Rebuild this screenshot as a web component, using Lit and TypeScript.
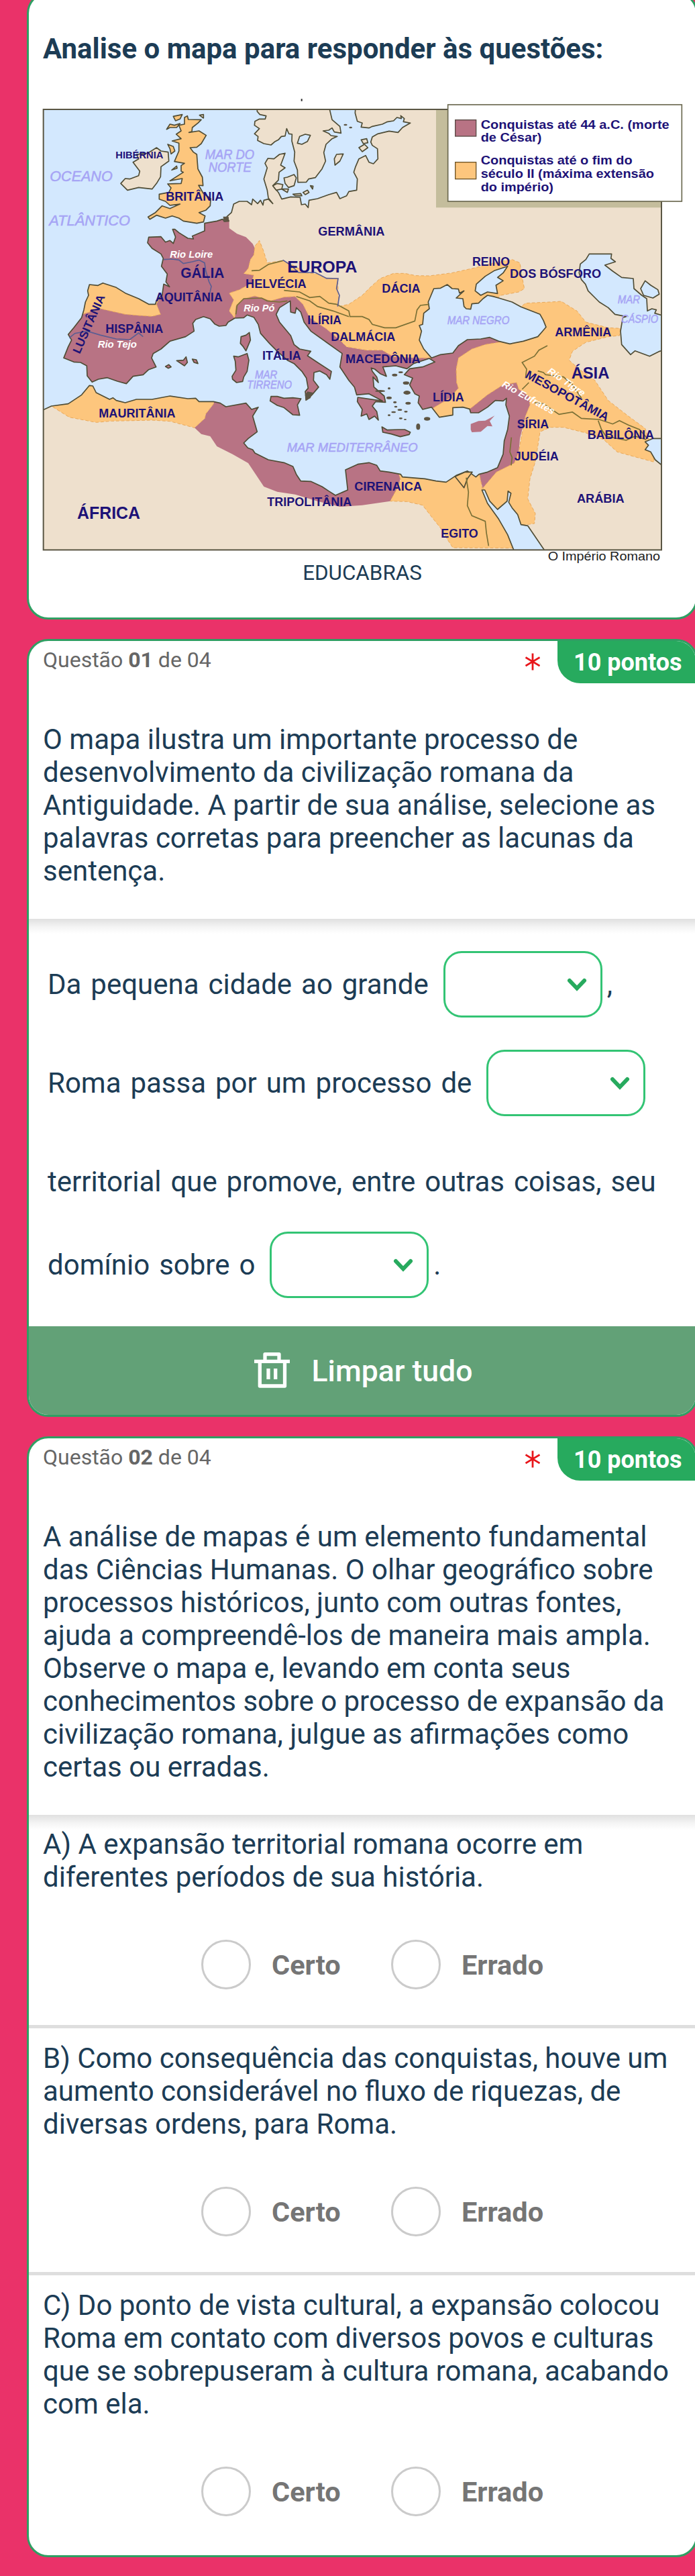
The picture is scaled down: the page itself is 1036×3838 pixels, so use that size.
import { html, svg, css, LitElement } from 'lit';
import { customElement, property } from 'lit/decorators.js';

// [text, x, baseline, width, size, rotation]
type MapLabel = [string, number, number, number, number, number?];

const LAND_LABELS: MapLabel[] = [
    ['HIBÉRNIA', 397, 288, 213, 46],
    ['BRITÂNIA', 622, 477, 258, 56],
    ['GERMÂNIA', 1303, 632, 297, 57],
    ['EUROPA', 1165, 797, 312, 74],
    ['GÁLIA', 688, 822, 195, 64],
    ['HELVÉCIA', 978, 866, 272, 56],
    ['AQUITÂNIA', 575, 927, 300, 56],
    ['HISPÂNIA', 352, 1067, 258, 56],
    ['ILÍRIA', 1255, 1028, 152, 56],
    ['DALMÁCIA', 1360, 1103, 288, 56],
    ['MACEDÔNIA', 1425, 1203, 335, 56],
    ['ITÁLIA', 1053, 1187, 173, 56],
    ['MAURITÂNIA', 322, 1445, 343, 57],
    ['ÁFRICA', 225, 1900, 282, 77],
    ['TRIPOLITÂNIA', 1075, 1841, 378, 56],
    ['CIRENAICA', 1465, 1774, 302, 56],
    ['EGITO', 1852, 1984, 166, 56],
    ['LÍDIA', 1815, 1373, 140, 56],
    ['SÍRIA', 2192, 1493, 142, 56],
    ['JUDÉIA', 2180, 1638, 198, 56],
    ['ARÁBIA', 2460, 1828, 212, 56],
    ['BABILÔNIA', 2507, 1543, 298, 56],
    ['ÁSIA', 2435, 1272, 170, 74],
    ['ARMÊNIA', 2362, 1082, 252, 56],
    ['DÁCIA', 1588, 887, 172, 56],
    ['REINO', 1992, 767, 168, 56],
    ['DOS BÓSFORO', 2160, 822, 408, 56],
    ['MESOPOTÂMIA', 2226, 1266, 415, 54, 28.5],
    ['LUSITÂNIA', 236, 1164, 282, 52, -66],
];

const SEA_LABELS: MapLabel[] = [
    ['OCEANO', 103, 391, 280, 64],
    ['ATLÂNTICO', 100, 587, 362, 64],
    ['MAR DO', 797, 291, 220, 58],
    ['NORTE', 812, 347, 192, 58],
    ['MAR', 1020, 1273, 100, 50],
    ['TIRRENO', 985, 1318, 200, 50],
    ['MAR MEDITERRÂNEO', 1163, 1600, 585, 57],
    ['MAR NEGRO', 1880, 1028, 278, 52],
    ['MAR', 2642, 935, 100, 50],
    ['CÁSPIO', 2658, 1024, 165, 50],
];

const RIVER_LABELS: MapLabel[] = [
    ['Rio Loire', 640, 732, 192, 46],
    ['Rio Pó', 970, 973, 138, 46],
    ['Rio Tejo', 317, 1133, 175, 46],
    ['Rio Eufrates', 2122, 1306, 262, 42, 29],
    ['Rio Tigre', 2326, 1245, 192, 42, 34],
];

const LEGEND_LABELS: MapLabel[] = [
    ['Conquistas até 44 a.C. (morte', 2030, 155, 843, 57],
    ['de César)', 2030, 214, 272, 57],
    ['Conquistas até o fim do', 2030, 315, 678, 57],
    ['século II (máxima extensão', 2030, 375, 775, 57],
    ['do império)', 2030, 435, 325, 57],
];

// conquered before 44 BC
const PURPLE = [
    'M880,540 L905,565 905,600 940,625 980,640 1010,670 1020,690 1015,720 1000,740 990,790 1015,810 1005,845 1200,905 1235,940 1265,1000 1340,1050 1400,1100 1430,1130 1520,1145 1590,1145 1640,1175 1740,1180 1810,1178 1905,1140 1980,1080 2040,1075 2120,1100 2200,1280 2260,1370 2230,1440 2205,1540 2200,1600 2180,1650 2100,1700 2040,1765 2020,1700 1750,1500 1200,1450 500,1310 150,1300 150,1000 240,960 560,960 520,600 Z',
    'M838,1340 L835,1385 800,1430 796,1450 750,1492 780,1520 820,1530 850,1575 920,1610 990,1650 1030,1710 1060,1755 1120,1778 1200,1790 1300,1820 1400,1845 1500,1838 1625,1820 1660,1760 1678,1690 1500,1500 1100,1350 Z',
];

// conquered until the end of the 2nd century
const ORANGE = [
    'M260,830 L600,900 580,940 598,985 560,994 500,990 440,985 330,960 230,990 Z',
    'M110,1395 L280,1290 840,1340 835,1385 800,1430 796,1450 750,1492 640,1463 560,1458 480,1460 380,1462 310,1468 190,1445 Z',
    'M970,803 L990,780 1000,740 1015,720 1020,680 1040,655 1058,700 1075,755 1145,745 1180,760 1250,800 1300,805 1340,825 1390,825 1395,950 1440,940 1500,900 1540,860 1580,825 1640,802 1690,802 1740,812 1800,813 1900,800 2000,778 2110,750 2170,740 2205,755 2215,820 2225,870 2200,885 2120,900 2100,915 2050,960 1790,1010 1770,1100 1810,1180 1740,1180 1640,1175 1590,1145 1520,1145 1430,1130 1400,1100 1340,1050 1265,1000 1235,940 1200,905 1150,908 1090,925 1020,903 970,915 935,950 930,1003 905,970 925,920 905,890 950,875 1005,845 1015,810 Z',
    'M2110,1110 L2050,1120 1990,1140 1930,1180 1920,1230 1922,1290 1930,1315 1890,1360 1810,1408 1840,1460 1915,1450 1985,1405 2060,1345 2130,1300 2190,1290 2200,1320 2245,1350 2250,1390 2230,1440 2210,1540 2200,1600 2180,1650 2100,1690 2040,1760 2060,1850 2200,1930 2270,1920 2274,1875 2240,1810 2250,1720 2275,1640 2295,1510 2340,1490 2400,1490 2500,1515 2580,1545 2640,1600 2720,1622 2805,1645 2800,1600 2765,1495 2690,1440 2600,1370 2540,1280 2470,1230 2425,1190 2440,1150 2500,1110 2600,1085 2650,1080 2655,1048 2600,1045 2500,1020 2460,970 2390,927 2340,930 2230,935 2205,955 2250,1060 Z',
    'M1660,1690 L1672,1725 1655,1765 1625,1820 1700,1822 1770,1838 1810,1890 1850,1940 1880,1990 1905,2028 2180,2030 2180,1990 2040,1780 2020,1680 Z',
];

const SEAS = [
    // Atlantic, North Sea, Baltic and Mediterranean
    'M60,60 L1030,60 1030,78 1042,92 1070,98 1066,112 1040,112 1020,122 1018,140 1040,155 1018,178 1034,190 1032,208 1060,222 1092,228 1108,214 1125,205 1138,190 1155,188 1162,155 1172,178 1186,180 1185,210 1198,260 1195,300 1210,340 1212,395 1250,394 1260,380 1290,374 1320,335 1336,300 1328,262 1338,225 1365,200 1388,190 1360,186 1350,176 1325,165 1350,162 1365,152 1375,170 1405,175 1400,145 1365,115 1352,60 1470,60 1468,85 1478,122 1500,130 1495,148 1530,152 1545,145 1590,135 1610,125 1640,120 1655,105 1675,110 1672,97 1688,110 1684,124 1715,130 1680,150 1660,172 1620,166 1570,178 1545,192 1538,215 1545,230 1568,245 1570,290 1550,312 1530,305 1515,275 1485,290 1470,325 1462,350 1478,380 1475,430 1440,436 1430,455 1400,468 1385,440 1350,450 1300,468 1262,475 1258,508 1245,492 1228,495 1222,462 1180,460 1140,470 1125,440 1100,410 1125,385 1128,350 1155,330 1135,318 1142,300 1155,265 1130,270 1105,290 1078,288 1065,310 1075,330 1060,380 1075,430 1080,465 1100,490 1080,470 1060,475 1056,497 1045,475 1032,490 1010,470 1005,495 985,480 950,480 925,492 915,530 895,548 903,568 885,570 875,560 850,568 795,578 795,612 740,635 745,648 720,645 680,620 662,605 652,605 665,640 655,668 640,655 620,662 600,638 545,640 540,665 560,690 600,715 610,735 602,770 628,805 622,840 638,862 612,850 605,900 580,922 575,940 545,940 500,915 440,890 400,865 340,845 318,856 280,852 272,880 276,900 262,930 255,965 245,1000 210,1045 185,1075 200,1100 185,1130 165,1180 210,1198 240,1200 268,1215 270,1260 292,1288 320,1275 360,1268 405,1284 445,1295 475,1262 520,1255 545,1232 578,1220 558,1180 565,1160 600,1140 640,1105 710,1085 748,1060 742,1025 755,1008 790,995 820,1005 840,1028 860,1038 890,1035 900,1020 930,1002 970,1000 985,988 1015,998 1035,1030 1045,1070 1085,1115 1120,1150 1165,1190 1195,1205 1230,1240 1250,1270 1258,1315 1245,1330 1250,1368 1275,1345 1305,1310 1282,1280 1284,1245 1310,1238 1340,1255 1355,1275 1362,1240 1300,1200 1255,1170 1270,1150 1220,1140 1195,1120 1180,1080 1130,1020 1115,985 1130,955 1178,925 1180,975 1200,980 1205,955 1225,975 1240,1020 1270,1060 1340,1110 1410,1160 1400,1220 1440,1280 1465,1310 1475,1345 1530,1340 1590,1372 1480,1356 1478,1375 1500,1410 1495,1440 1520,1430 1530,1455 1555,1440 1572,1458 1565,1420 1545,1395 1560,1375 1604,1378 1598,1350 1552,1310 1548,1265 1572,1290 1565,1265 1545,1240 1540,1225 1556,1230 1580,1250 1608,1262 1592,1220 1650,1215 1700,1228 1730,1205 1800,1182 1825,1198 1770,1220 1712,1228 1688,1255 1725,1270 1712,1300 1735,1340 1755,1350 1750,1380 1770,1410 1810,1400 1845,1445 1905,1435 1905,1402 1950,1400 1980,1408 1985,1425 2020,1425 2060,1400 2095,1370 2130,1372 2145,1360 2142,1390 2158,1440 2150,1500 2135,1550 2130,1610 2105,1670 2060,1690 2022,1700 2008,1712 1970,1685 1920,1705 1875,1735 1830,1730 1780,1720 1680,1712 1672,1700 1620,1690 1580,1685 1565,1660 1530,1648 1480,1655 1425,1680 1435,1770 1380,1794 1350,1775 1320,1755 1270,1732 1225,1730 1205,1700 1190,1665 1150,1648 1080,1635 1020,1605 1010,1590 988,1582 970,1560 990,1540 1030,1510 1010,1440 1035,1400 1005,1410 980,1382 890,1398 865,1382 835,1375 770,1375 755,1360 720,1362 640,1350 560,1365 490,1365 440,1380 400,1370 385,1358 370,1365 310,1335 295,1305 280,1303 245,1345 185,1385 110,1395 60,1418 Z',
    // Black Sea
    'M1880,852 L1902,870 1930,872 1935,890 1955,880 1920,912 1950,915 1955,950 1965,960 1985,962 1990,938 2020,935 2040,915 2060,900 2085,905 2110,912 2170,930 2210,952 2270,975 2295,985 2310,1012 2322,1042 2305,1062 2285,1085 2220,1105 2160,1117 2110,1105 2070,1088 2030,1095 1970,1098 1930,1125 1905,1158 1850,1165 1810,1180 1775,1140 1755,1100 1765,1060 1755,1035 1770,1030 1775,980 1800,960 1795,930 1820,870 1850,868 Z',
    // Sea of Azov
    'M2150,770 L2090,790 2050,815 2010,850 2005,880 2030,900 2060,885 2105,892 2098,855 2130,835 2105,820 2130,800 Z',
    // Caspian Sea
    'M2515,715 L2615,715 2612,735 2632,750 2585,765 2620,792 2660,820 2712,825 2715,870 2750,900 2772,915 2775,970 2795,960 2815,965 2808,980 2850,992 2850,1145 2830,1150 2785,1172 2720,1148 2700,1165 2660,1120 2655,1060 2665,1000 2680,995 2630,985 2600,955 2560,930 2510,880 2498,850 2480,830 2470,800 2475,760 2500,740 Z',
    'M2765,835 L2745,870 2758,900 2800,912 2828,895 2822,875 2790,855 Z',
    // Persian Gulf
    'M2850,1540 L2800,1540 2765,1555 2780,1570 2765,1590 2790,1600 2810,1635 2850,1668 Z',
    // Red Sea
    'M2035,1770 L2060,1830 2110,1900 2150,1970 2180,2045 2322,2050 2240,1930 2210,1925 2195,1880 2170,1850 2155,1825 2165,1785 2152,1775 2148,1820 2105,1857 2070,1820 2048,1770 Z',
];

const ISLANDS = {
    orange: [
        'M705,105 L718,98 722,114 780,115 765,130 740,150 738,168 725,172 770,165 802,185 780,222 760,238 730,240 745,260 760,270 765,335 785,372 788,410 768,408 790,445 822,468 820,500 800,520 770,530 797,545 790,572 760,578 700,568 680,555 650,545 620,555 580,542 550,560 542,550 575,530 605,500 640,512 685,492 640,498 620,480 592,470 592,448 635,440 645,420 630,402 690,400 695,378 640,388 700,350 690,345 690,320 705,310 660,302 680,255 680,220 650,210 690,200 668,180 690,165 680,140 705,135 Z',
        'M655,100 L695,92 685,112 665,120 Z',
        'M625,158 L640,135 660,140 685,132 670,150 640,150 Z',
        'M630,225 L655,235 662,255 645,268 640,245 Z',
        'M648,340 L670,322 672,332 Z',
        'M1915,1710 L1960,1690 1992,1690 1970,1720 1955,1760 Z',
    ],
    purple: [
        'M995,1066 L1000,1100 980,1148 968,1130 955,1115 958,1085 980,1078 Z',
        'M925,1172 L945,1175 985,1160 993,1190 985,1240 970,1265 965,1285 938,1290 920,1275 918,1262 935,1235 932,1195 Z',
        'M1092,1352 L1120,1352 1150,1360 1190,1358 1226,1362 1210,1390 1220,1436 1190,1434 1150,1402 1120,1392 1088,1372 Z',
        'M1588,1488 L1612,1502 1660,1500 1690,1500 1715,1512 1710,1522 1670,1532 1630,1520 1592,1512 Z',
        'M670,1192 L700,1190 712,1175 718,1200 705,1215 Z',
        'M620,1218 L635,1210 645,1220 632,1226 Z',
        'M740,1185 L758,1188 765,1205 748,1200 Z',
    ],
    beige: [
        'M580,240 L600,255 632,260 635,300 600,325 598,370 580,400 560,425 500,418 450,430 420,400 440,378 460,380 500,365 505,345 475,305 500,290 490,270 540,265 Z',
        'M1150,375 L1165,372 1195,360 1205,375 1195,410 1170,418 1155,400 Z',
        'M1100,410 L1120,400 1145,405 1140,425 1115,430 Z',
        'M1140,425 L1170,425 1165,440 Z',
        'M1375,290 L1385,270 1415,268 1400,300 1378,318 Z',
        'M1235,440 L1255,430 1262,440 1245,450 Z',
        'M1485,240 L1510,225 1525,240 1500,258 Z',
        'M1495,205 L1520,200 1525,218 1505,222 Z',
        'M1268,410 L1280,412 1278,425 Z',
        'M1190,448 L1225,445 1230,455 1200,455 Z',
        'M772,95 L790,92 790,108 Z',
    ],
};

// Aegean islands
const SPECKS: [number, number, number, number][] = [
    [1645, 1256, 12, 6], [1672, 1244, 10, 4], [1696, 1292, 14, 7], [1700, 1335, 16, 9],
    [1620, 1316, 6, 5], [1705, 1382, 12, 6], [1580, 1328, 22, 5], [1620, 1358, 12, 6],
    [1646, 1378, 8, 5], [1650, 1398, 7, 4], [1620, 1436, 6, 4], [1640, 1422, 10, 4],
    [1668, 1412, 10, 4], [1695, 1420, 8, 4], [1672, 1450, 8, 4], [1692, 1455, 6, 3],
    [1790, 1452, 14, 8], [1750, 1487, 9, 14], [1425, 138, 8, 4], [1448, 150, 7, 4],
];

const RIVERS = {
    blue: [
        'M612,740 L650,738 680,742 700,758 740,750 770,742 795,755 800,790 815,840 825,860 815,905',
        'M190,1090 L215,1070 270,1060 330,1078 400,1095 460,1098 500,1068 520,1085',
        'M1145,742 L1180,765 1215,798 1290,798 1340,824 1392,825 1385,870 1398,900 1390,950',
    ],
    olive: [
        'M935,985 L940,945 970,915 1050,912 1075,925 1130,930 1165,925',
        'M1005,790 L1040,788 1080,762 1145,745',
        'M1150,878 L1220,885 1265,910 1310,905 1350,935 1385,940 1440,970 1445,995 1500,995 1530,1008 1545,1030 1600,1045 1650,1045 1735,1015 1745,965 1760,945 1800,940',
        'M1205,905 L1265,925 1300,950 1370,970 1440,995',
        'M2328,1125 L2290,1145 2270,1172 2215,1200 2235,1230 2230,1270',
        'M2285,1238 L2310,1245 2320,1255 2400,1265 2440,1300 2470,1345 2480,1360',
        'M2215,1320 L2245,1290',
        'M2270,1380 L2310,1385 2380,1432 2440,1422 2480,1450 2560,1455 2620,1475 2650,1460 2690,1480 2740,1500 2775,1540',
        'M2555,1460 L2570,1500 2590,1530 2680,1548 2720,1530 2770,1545',
        'M1965,1715 L1975,1780 1970,1840 1990,1885 2050,1910 2055,1960 2065,2020',
        'M2167,1535 L2160,1600 2170,1625 2166,1660',
    ],
};

@customElement('roman-map')
class RomanMap extends LitElement {
    static styles = css`
    :host {
        display: block;
        height: 692px;
    }
    svg {
        display: block;
        width: 953px;
        height: 692px;
        overflow: visible;
        font-family: "Liberation Sans", Arial, sans-serif;
    }
    .purple { fill: #b87384; }
    .orange { fill: #fdc67d; }
    .beige { fill: #eee0cd; }
    .sea { fill: #d3e8fe; }
    .coast { stroke: #4f4c35; stroke-width: 5; stroke-linejoin: round; }
    .dashed { stroke: #e9a95b; stroke-width: 3; stroke-dasharray: 14 9; }
    .speck { fill: #5d5544; }
    .frame { fill: none; stroke: #5a5644; stroke-width: 6; }
    .river { fill: none; stroke-width: 5; }
    .blue { stroke: #5b5e93; }
    .olive { stroke: #7a7036; }
    .land-label { fill: #1d1277; font-weight: 700; }
    .sea-label { fill: #a6a4f5; font-style: italic; stroke: #a6a4f5; stroke-width: 1.5; }
    .river-label { fill: #fff; font-style: italic; font-weight: 700; }
    .source { fill: #222; font-size: 56px; }
  `;

    labels(list: MapLabel[], cls: string) {
        return list.map(([text, x, y, width, size, angle = 0]) => svg`
            <text class=${cls} x=${x} y=${y} font-size=${size} textLength=${width}
                lengthAdjust="spacingAndGlyphs" transform="rotate(${angle} ${x} ${y})">${text}</text>`);
    }

    shapes(list: string[], cls: string) {
        return list.map((d) => svg`<path class=${cls} d=${d} />`);
    }

    render() {
        return html`
            <svg viewBox="72 15 2859 2076">
                <defs>
                    <clipPath id="area"><rect x="74" y="69" width="2764" height="1969" /></clipPath>
                </defs>
                <rect x="1226" y="22" width="6" height="10" fill="#222" />
                <g clip-path="url(#area)">
                    <rect class="beige" x="74" y="69" width="2764" height="1969" />
                    ${this.shapes(PURPLE, 'purple')}
                    ${this.shapes(ORANGE, 'orange dashed')}
                    ${this.shapes(SEAS, 'sea coast')}
                    ${this.shapes(ISLANDS.beige, 'beige coast')}
                    ${this.shapes(ISLANDS.orange, 'orange coast')}
                    ${this.shapes(ISLANDS.purple, 'purple coast')}
                    <path class="purple" d="M1985,1500 L1985,1475 2020,1462 2050,1460 2092,1438 2070,1462 2082,1486 2060,1484 2030,1510 1990,1512 Z" />
                    <path class="sea coast" d="M1210,220 L1220,190 1245,180 1268,185 1255,212 1230,225 Z" />
                    ${SPECKS.map(([x, y, rx, ry]) => svg`<ellipse class="speck" cx=${x} cy=${y} rx=${rx} ry=${ry} />`)}
                    <path class="speck" d="M1255,1330 L1280,1335 1268,1360 1246,1372 1244,1345 Z" />
                    <path class="speck" d="M878,548 L902,548 904,568 880,572 Z" />
                    ${this.shapes(RIVERS.olive, 'river olive')}
                    ${this.shapes(RIVERS.blue, 'river blue')}
                    <path fill="#c4bd9c" d="M1830,69 H2838 V508 H1830 Z" />
                </g>
                <rect class="frame" x="74" y="69" width="2764" height="1969" />
                <rect x="1883" y="48" width="1046" height="432" fill="#fff" stroke="#6b6950" stroke-width="5" />
                <rect class="purple" x="1916" y="116" width="93" height="73" stroke="#5a4a45" stroke-width="4" />
                <rect class="orange" x="1916" y="305" width="93" height="75" stroke="#6e5325" stroke-width="4" />
                ${this.labels(LEGEND_LABELS, 'land-label')}
                ${this.labels(SEA_LABELS, 'sea-label')}
                ${this.labels(LAND_LABELS, 'land-label')}
                ${this.labels(RIVER_LABELS, 'river-label')}
                <text class="source" x="2330" y="2085" textLength="502" lengthAdjust="spacingAndGlyphs">O Império Romano</text>
            </svg>
        `;
    }
}

@customElement('question-header')
class QuestionHeader extends LitElement {
    static styles = css`
    :host {
        display: flex;
        align-items: flex-start;
        height: 62px;
        color: #666;
        font-size: 32px;
        line-height: 36px;
    }
    .number {
        flex: 1;
        padding: 10px 0 0 21px;
    }
    .required {
        width: 22px;
        height: 26px;
        margin: 18px 26px 0 0;
    }
    .points {
        box-sizing: border-box;
        width: 206px;
        height: 65px;
        margin-top: -2px;
        padding: 14px 0 0 24px;
        border-bottom-left-radius: 34px;
        background: #27aa5e;
        color: #fff;
        font-size: 36px;
        font-weight: 700;
        line-height: 40px;
    }
  `;

    @property() number = '';

    render() {
        return html`
            <div class="number">Questão <b>${this.number}</b> de 04</div>
            <svg class="required" viewBox="0 0 22 26"><path d="M11 0.5V25.500M0.500 6.500L21.500 19M21.500 6.500L0.500 19" stroke="#e8161b" stroke-width="2.800" fill="none" /></svg>
            <div class="points">10 pontos</div>
        `;
    }
}

@customElement('gap-select')
class GapSelect extends LitElement {
    static styles = css`
    :host {
        box-sizing: border-box;
        display: flex;
        align-items: center;
        justify-content: flex-end;
        width: 237px;
        height: 99px;
        padding-right: 20px;
        border: 3px solid #33c474;
        border-radius: 27px;
    }
    svg {
        width: 30px;
        height: 20px;
    }
  `;

    render() {
        return html`<svg viewBox="0 0 30 20"><path d="M4 4L15 15.5L26 4" fill="none" stroke="#27aa5e" stroke-width="6" stroke-linecap="round" /></svg>`;
    }
}

@customElement('app-root')
class AppRoot extends LitElement {
    static styles = css`
    :host {
        display: block;
        box-sizing: border-box;
        height: 3838px;
        overflow: hidden;
        background: #ea3269;
        color: #1c3c55;
        font-family: Roboto, sans-serif;
        font-size: 42px;
        line-height: 49px;
    }
    .card {
        box-sizing: border-box;
        width: 1000px;
        margin: 0 0 29px 40px;
        border: 3px solid #2f9f63;
        border-radius: 32px;
        background: #fff;
        overflow: hidden;
    }
    .intro {
        height: 935px;
        margin-top: -12px;
        padding: 57px 0 0 21px;
    }
    .intro h1 {
        margin: 0 0 48px;
        font-size: 42px;
        font-weight: 700;
        line-height: 49px;
    }
    .caption {
        margin-right: 21px;
        font-size: 31.4px;
        line-height: 34px;
        text-align: center;
    }
    .cloze {
        height: 1159px;
    }
    .statement {
        padding: 60px 0 47px 21px;
    }
    .shadow {
        height: 22px;
        background: linear-gradient(#e0e0e0, #f4f4f4 55%, #fff);
    }
    .line {
        display: flex;
        align-items: center;
        height: 99px;
        margin: 0 0 48px 28px;
        word-spacing: 3.5px;
        white-space: pre;
    }
    .line gap-select {
        margin: 0 7px 0 22px;
    }
    .line.first {
        margin-top: 26px;
    }
    .line.short {
        margin-bottom: 25px;
    }
    .line.last {
        margin-bottom: 42px;
    }
    .clear {
        display: flex;
        align-items: center;
        justify-content: center;
        gap: 33px;
        height: 134px;
        padding-left: 3px;
        background: #62a177;
        color: #fff;
        font-size: 44.5px;
        font-weight: 500;
    }
    .clear svg {
        width: 53px;
        height: 53px;
        margin-bottom: 4px;
    }
    .item {
        border-top: 5px solid #dedede;
        padding: 20px 0 0 21px;
    }
    .item.first {
        border: none;
        margin-top: -22px;
        padding-top: 19px;
    }
    .options {
        display: flex;
        align-items: center;
        height: 74px;
        margin: 69px 0 53px;
        color: #757575;
        font-size: 41.5px;
        font-weight: 700;
    }
    .option {
        display: flex;
        align-items: center;
        width: 283px;
    }
    .option:first-child {
        margin-left: 236px;
    }
    .radio {
        box-sizing: border-box;
        width: 74px;
        height: 74px;
        margin-right: 31px;
        border: 3px solid #cbcbcb;
        border-radius: 50%;
    }
    .judge {
        height: 1670px;
    }
  `;

    item(lines: string[], index: number) {
        return html`
            <div class="item ${index === 0 ? 'first' : ''}">
                ${lines.map((line) => html`${line}<br>`)}
                <div class="options">
                    <div class="option"><span class="radio"></span>Certo</div>
                    <div class="option"><span class="radio"></span>Errado</div>
                </div>
            </div>
        `;
    }

    render() {
        return html`
            <section class="card intro">
                <h1>Analise o mapa para responder às questões:</h1>
                <roman-map></roman-map>
                <div class="caption">EDUCABRAS</div>
            </section>

            <section class="card cloze">
                <question-header number="01"></question-header>
                <div class="statement">
                    O mapa ilustra um importante processo de<br>
                    desenvolvimento da civilização romana da<br>
                    Antiguidade. A partir de sua análise, selecione as<br>
                    palavras corretas para preencher as lacunas da<br>
                    sentença.
                </div>
                <div class="shadow"></div>
                <div class="line first">Da pequena cidade ao grande<gap-select></gap-select>,</div>
                <div class="line">Roma passa por um processo de<gap-select></gap-select></div>
                <div class="line short">territorial que promove, entre outras coisas, seu</div>
                <div class="line last">domínio sobre o<gap-select></gap-select>.</div>
                <div class="clear">
                    <svg viewBox="0 0 53 53"><path d="M0 13.300H53M8.300 13.300V50H45.500V13.300M16 13.300V2.700H37V13.300M21 24V40M31.700 24V40" fill="none" stroke="#fff" stroke-width="5.300" stroke-linejoin="round" /></svg>
                    Limpar tudo
                </div>
            </section>

            <section class="card judge">
                <question-header number="02"></question-header>
                <div class="statement">
                    A análise de mapas é um elemento fundamental<br>
                    das Ciências Humanas. O olhar geográfico sobre<br>
                    processos históricos, junto com outras fontes,<br>
                    ajuda a compreendê-los de maneira mais ampla.<br>
                    Observe o mapa e, levando em conta seus<br>
                    conhecimentos sobre o processo de expansão da<br>
                    civilização romana, julgue as afirmações como<br>
                    certas ou erradas.
                </div>
                <div class="shadow"></div>
                ${[
                    ['A) A expansão territorial romana ocorre em', 'diferentes períodos de sua história.'],
                    ['B) Como consequência das conquistas, houve um', 'aumento considerável no fluxo de riquezas, de', 'diversas ordens, para Roma.'],
                    ['C) Do ponto de vista cultural, a expansão colocou', 'Roma em contato com diversos povos e culturas', 'que se sobrepuseram à cultura romana, acabando', 'com ela.'],
                ].map((lines, i) => this.item(lines, i))}
            </section>
        `;
    }
}

export { AppRoot, GapSelect, QuestionHeader, RomanMap };
